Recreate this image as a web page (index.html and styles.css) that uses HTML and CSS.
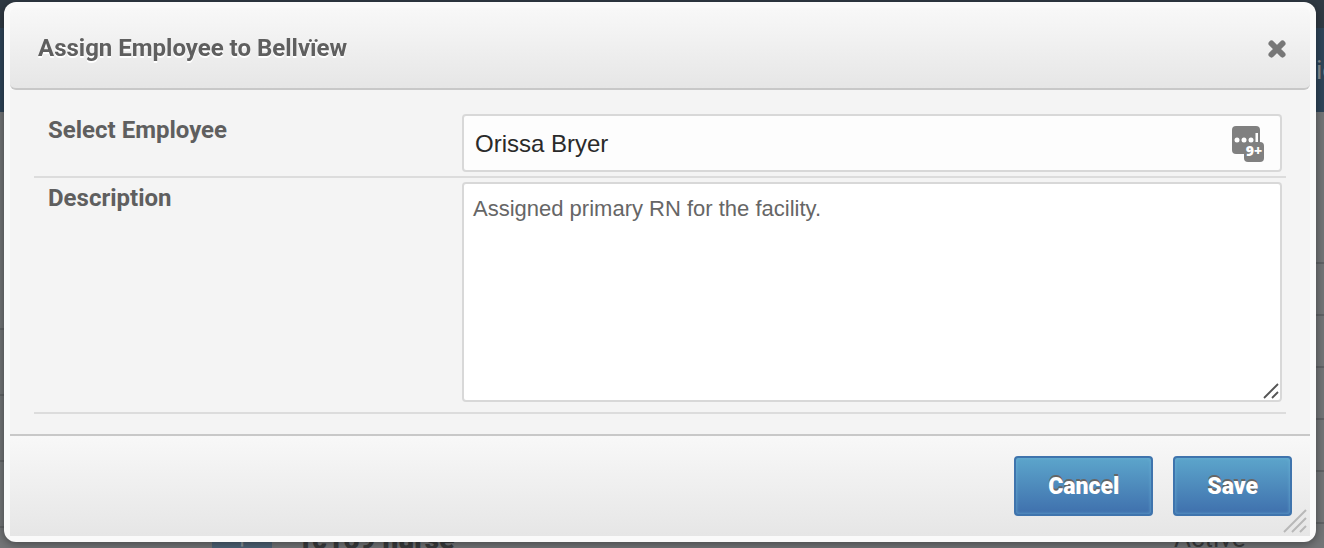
FILE: index.html
```html
<!DOCTYPE html>
<html lang="en">
<head>
    <meta charset="UTF-8">
    <meta name="viewport" content="width=device-width, initial-scale=1.0">
    <title>Assign Employee</title>
    <link rel="stylesheet" href="styles.css">
</head>
<body>

    <div class="page">
        <div class="topbar"></div>
        <div class="navbar"><span class="nav-text">ic</span></div>
        <div class="page-content">
            <div class="side-lines"></div>
            <div class="page-row">
                <span class="row-button">+</span>
                <span class="row-name">rc169 nurse</span>
                <span class="row-status">Active</span>
            </div>
            <div class="list-lines"></div>
        </div>
    </div>

    <div class="overlay">
        <form class="dialog" role="dialog" aria-labelledby="dialog-title">
            <header class="dialog-header">
                <h1 id="dialog-title">Assign Employee to Bellvïew</h1>
                <button type="button" class="close-button" aria-label="Close">
                    <svg width="20" height="20" viewBox="0 0 20 20">
                        <path d="M4.5 4.5L15.5 15.5M15.5 4.5L4.5 15.5" stroke="#777" stroke-width="6" stroke-linecap="round"/>
                    </svg>
                </button>
            </header>

            <div class="dialog-body">
                <div class="form-row">
                    <label for="employee">Select Employee</label>
                    <div class="field">
                        <input type="text" id="employee" value="Orissa Bryer">
                        <svg class="manager-icon" width="32" height="36" viewBox="0 0 32 36">
                            <rect x="0" y="0" width="28" height="28" rx="4" fill="#808080"/>
                            <rect x="12" y="16" width="20" height="20" rx="4" fill="#808080"/>
                            <circle cx="5" cy="14" r="2.5" fill="#fff"/>
                            <circle cx="12" cy="14" r="2.5" fill="#fff"/>
                            <circle cx="19" cy="14" r="2.5" fill="#fff"/>
                            <rect x="23.5" y="7" width="2.5" height="9" fill="#fff"/>
                            <text class="badge-text" x="22" y="30" text-anchor="middle">9+</text>
                        </svg>
                    </div>
                </div>
                <div class="form-row">
                    <label for="description">Description</label>
                    <div class="field">
                        <textarea id="description">Assigned primary RN for the facility.</textarea>
                        <svg class="text-grip" width="16" height="16" viewBox="0 0 16 16">
                            <path d="M1 15L15 1M9 15L15 9" stroke="#555" stroke-width="1.8"/>
                        </svg>
                    </div>
                </div>
            </div>

            <footer class="dialog-footer">
                <button type="button" class="button">Cancel</button>
                <button type="submit" class="button">Save</button>
            </footer>
            <svg class="dialog-grip" width="24" height="24" viewBox="0 0 24 24">
                <path d="M1 23L23 1M9 23L23 9M17 23L23 17" stroke="#b8b8b8" stroke-width="2"/>
            </svg>
        </form>
    </div>

</body>
</html>
```
FILE: styles.css
```css
* {
    box-sizing: border-box;
}
body {
    margin: 0;
    height: 100vh;
    overflow: hidden;
    font-family: Roboto, sans-serif;
    color: #5f5f5f;
}

/* Page behind the dialog */
.page {
    display: flex;
    flex-direction: column;
    height: 100vh;
    background-color: #737577;
    overflow: hidden;
}
.topbar {
    flex: 0 0 28px;
    background-color: #303a44;
}
.navbar {
    flex: 0 0 84px;
    display: flex;
    align-items: center;
    justify-content: flex-end;
    background-color: #2f4559;
}
.nav-text {
    width: 8px;
    font-size: 26px;
    color: #8a8d90;
}
.page-content {
    flex: 1;
    display: flex;
    align-items: flex-end;
    justify-content: space-between;
}
.side-lines, .list-lines {
    flex: 0 0 16px;
    height: 100%;
}
.side-lines {
    background:
        linear-gradient(#737577 210px, transparent 210px),
        repeating-linear-gradient(transparent 0 18px, #626467 18px 20px, transparent 20px 66px);
}
.list-lines {
    background:
        linear-gradient(#737577 140px, transparent 140px),
        repeating-linear-gradient(transparent 0 46px, #606265 46px 48px, transparent 48px 52px);
}
.page-row {
    flex: 1;
    display: flex;
    height: 24px;
    padding-left: 196px;
    line-height: 32px;
    color: #393b3d;
}
.row-button {
    width: 60px;
    margin-right: 30px;
    background-color: #4e6376;
    color: #8a949c;
    font-size: 24px;
    text-align: center;
}
.row-name {
    flex: 1;
    font-size: 28px;
    font-weight: 900;
}
.row-status {
    width: 134px;
    font-size: 26px;
    line-height: 28px;
}

/* Dialog */
.overlay {
    position: fixed;
    inset: 0;
    padding: 2px 8px 6px 4px;
}
.dialog {
    position: relative;
    display: flex;
    flex-direction: column;
    height: 100%;
    padding: 6px;
    background-color: #fafafa;
    border-radius: 12px;
    box-shadow: 0 2px 10px rgba(0, 0, 0, 0.4);
}
.dialog-header {
    display: flex;
    align-items: center;
    justify-content: space-between;
    height: 82px;
    padding: 0 23px 0 28px;
    background: linear-gradient(#f8f8f8, #e6e6e6);
    border-bottom: 2px solid #c8c8c8;
    border-radius: 6px;
}
h1 {
    margin: 0;
    font-size: 24px;
    line-height: 32px;
    font-weight: 700;
    text-shadow: 0 2px 0 #fff;
}
.close-button {
    display: flex;
    padding: 2px 0 0;
    border: none;
    background: none;
    cursor: pointer;
}
.dialog-body {
    flex: 1;
    padding: 20px 24px;
    background-color: #f4f4f4;
}
.form-row {
    display: flex;
    padding: 4px 4px 4px 14px;
    border-bottom: 2px solid #dcdcdc;
}
.form-row label {
    flex: 0 0 414px;
    font-size: 24px;
    line-height: 32px;
    font-weight: 700;
}
.field {
    position: relative;
    display: flex;
    flex: 1;
}
input, textarea {
    width: 100%;
    border: 2px solid #d8d8d8;
    border-radius: 4px;
    font-family: "Liberation Sans", Arial, sans-serif;
}
input {
    height: 58px;
    padding: 2px 60px 0 11px;
    font-size: 24px;
    background-color: #fdfdfd;
    color: #2a2a2a;
}
textarea {
    height: 220px;
    margin-bottom: 6px;
    padding: 12px 9px;
    font-size: 22px;
    line-height: 26px;
    color: #666;
    resize: none;
}
.manager-icon {
    position: absolute;
    top: 12px;
    right: 18px;
}
.badge-text {
    font-family: "Open Sans", sans-serif;
    font-size: 14px;
    font-weight: 800;
    fill: #fff;
}
.text-grip {
    position: absolute;
    right: 3px;
    bottom: 9px;
}
.dialog-footer {
    display: flex;
    align-items: flex-start;
    justify-content: flex-end;
    gap: 20px;
    height: 102px;
    padding: 20px 18px;
    background: linear-gradient(#f8f8f8, #e6e6e6);
    border-top: 2px solid #c8c8c8;
}
.button {
    height: 60px;
    padding: 0 32px;
    border: 2px solid #3f74ad;
    border-radius: 4px;
    background: linear-gradient(#5ca5cb, #3f70ad);
    box-shadow: inset 0 0 3px 1px rgba(110, 180, 215, 0.5);
    font-family: Roboto, sans-serif;
    font-size: 23px;
    font-weight: 900;
    color: #fff;
    text-shadow: 0 -2px 0 #666;
    cursor: pointer;
}
.dialog-grip {
    position: absolute;
    right: 9px;
    bottom: 9px;
}
```
